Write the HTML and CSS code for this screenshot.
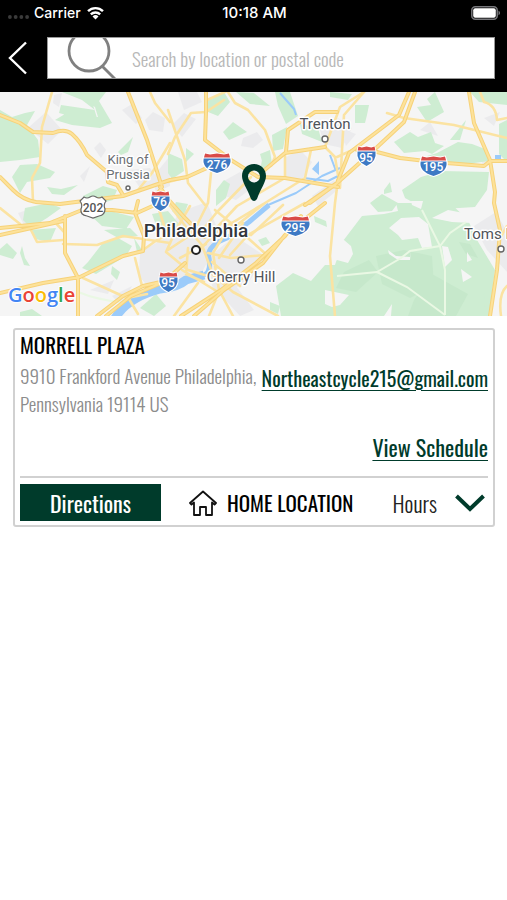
FILE: index.html
```html
<!DOCTYPE html>
<html lang="en">
<head>
<meta charset="utf-8">
<meta name="viewport" content="width=device-width, initial-scale=1">
<title>Locations</title>
<link rel="stylesheet" href="styles.css">
</head>
<body>
<header class="top">
  <div class="status">
    <div class="status-left">
      <svg class="dots" viewBox="0 0 22 4" aria-hidden="true"><circle cx="2" cy="2" r="2"/><circle cx="8" cy="2" r="2"/><circle cx="14" cy="2" r="2"/><circle cx="20" cy="2" r="2"/></svg>
      <span>Carrier</span>
      <svg class="wifi" viewBox="0 0 20 15" aria-hidden="true"><path d="M2 5.5a11.500 11.500 0 0 1 16 0M5 9a7.200 7.200 0 0 1 10 0"/><path class="wifi-base" d="M10 14.500 6.800 11.300a4.600 4.600 0 0 1 6.400 0z"/></svg>
    </div>
    <time>10:18 AM</time>
    <svg class="battery" viewBox="0 0 30 14" aria-hidden="true"><rect class="battery-case" x=".8" y=".8" width="25.400" height="12.400" rx="3.500"/><rect class="battery-fill" x="2.200" y="2.200" width="22.600" height="9.600" rx="2"/><path class="battery-tip" d="M27.500 4.800c2 .7 2 3.700 0 4.400z"/></svg>
  </div>
  <form class="search-row">
    <button class="back" type="button" aria-label="Back"><svg viewBox="0 0 20 34" aria-hidden="true"><path d="M18 1.500 2 17l16 15.500"/></svg></button>
    <label class="search">
      <svg class="lens" viewBox="0 0 50 40" aria-hidden="true"><circle cx="22" cy="13" r="20"/><path d="m35 28 13 13"/></svg>
      <input type="search" placeholder="Search by location or postal code" aria-label="Search by location or postal code">
    </label>
  </form>
</header>

<main>
  <svg class="map" viewBox="0 92 507 224" role="img" aria-label="Map of the Philadelphia area">
    <defs>
      <symbol id="shield" viewBox="0 0 20 20" preserveAspectRatio="none" overflow="visible">
        <path fill="#fff" d="M1-.5 5 .5 10-.5l5 1 4-1 1.500 6q1.500 11-10.500 15.500Q-2 16.500-.5 5.500z"/>
        <path fill="#3d79c4" d="M.5 5.500h19Q21 15.500 10 20-1 15.500.5 5.500z"/>
        <path fill="#d94b48" d="M1.500.5 5 1.500l5-1 5 1 3.500-1 .8 4H.7z"/>
      </symbol>
      <path id="major" d="M0 115l20 8 13 9 20 1q12-5 19 1 9 8 15 21l20 17 1 10 9 3 6 10M0 177l13 13q10 10 23 12l24 2 63-8 47-16 17-3 20-9M128 92l19 48 15 47-4 6M0 228l50-5 32-13 30 0 25 3 20-9M0 235l63-14M65 216v37l13 25v38M0 293l43-10 37-6 43-21 20-5 1-15-9-23 3-12M97 316l26-20 20-10 22-5 20-18M106 316l25-20 28-12M231 160l27 17 27 1 53 9M261 173l24-20 40-6M286 152l2-22 27-18h22M206 92v20l-1 28 26 20M301 216l-16 20-29 27-35 27-40 26M325 203l-40 32-22 28-39 27-30 26M409 92l-10 23-50 38-12 30-32 22M415 92l-11 30-30 28-38 34-26 19M469 92l5 31 16 37 5 32-1 11M357 150l20 2 23 6 34 4 50 4 6-5h17M494 203l6 27-3 40-7 46M160 187l8 12 16 18 20 20"/>
    </defs>
    <rect class="land" y="92" width="507" height="224"/>
    <g class="urban">
      <path d="M28 128l18-16 16 18-14 14zM80 176l10-10-6 16zM94 148l6-6 6 8-5 8zM54 95l8-2-3 14-6-4zM122 110l10-6 10 14-6 6zM145 120l8-8 12 6-2 14-14-2zM152 178l18-22v30l-14 6zM128 170l22-2 10 14-20 6z"/>
      <path d="M140 252l25-14 14-26 28-10 10 26-2 20-14 26-28 8-22 8-12-14zM205 260l30-24 30 20-16 26-34 14zM172 125l12-12 12 6-14 18zM243 138l14-6 6 8-10 8-12-2zM284 158l16-8 12 12-10 18-16-4zM320 130l18-12 14 10-10 20-18-4zM312 196l22-16 6 8-22 18zM178 92l18-2 6 12-18 8zM222 182l18-10 12 16-16 12-16-6z"/>
      <path d="M218 292l18-6 18 24-14 6zM90 290l24-10-6 14zM112 296l20-10-10 20zM420 130l10-8 8 14zM484 118l16-6-6 14zM476 148l12 4-4 16zM364 220l22-6-4 16-16 6zM474 226l22-14 11 20v40l-20-22zM340 128l16 6-10 12zM18 213l12-4 4 12-10 4zM440 190l10 4-4 12z"/>
    </g>
    <g class="park">
      <path d="M62 92h27l8 26-16 1-22-6 2-8 34 5-13-10zM0 110l12 7 13-4 10-2-8 14 11 15 2 17-20 3-20 2zM12 177l8-12 17-1 18 8-5 6-23 4-7 11zM47 187l14 2 17-4-14 10-12-1zM118 152l15-15-5 15-7 3zM70 92h36l-7 9 13 22-12 5-28-3-17-5 10-6 33 3-3-10zM83 196l20-10 14 4-4 10-22 6z"/>
      <path d="M25 208l24-5 12 5-14 10-16 10-8-8zM30 230l26-2-6 14-15-3zM0 249l7-6 10 10-4 6-13-4zM22 246l3 12 5 8-6-1-4-12zM90 215l20-4 24 6-8 12-24-3zM104 230l26-2 8 8-20 2zM88 262l14-18 16-6 14 8-6 10-30 18-14-6zM112 266l8 6-3 8-6-6zM134 238l8 12-5 2zM20 312l12-3 10 7H20zM140 308l16-14 10 12-12 10zM152 214l16-3 12 14-14 6-10-6zM176 202l12 2-6 16-10-9z"/>
      <path d="M206 100l18-8 6 10-12 14-10-4zM223 132l10-10 14 10-18 8zM272 135l15-8-4 22-10 2zM260 154l10-4 2 14-8 4zM300 124l18 4 4 14-20-8zM168 153l14 6 2 12-12 8-4-6zM216 190l8-10 6 4-4 14-10 8zM236 92l18 1 16 13-20-2zM275 92h15l8 24-12 8-8-18zM330 92l22 2-4 6-18-3zM262 160l6-5-2 13-6 3zM186 148l8 6-8 8z"/>
      <path d="M355 105h14l-2 10-2 8h-10zM417 107l14-2-4-6 8-7 9 20-17 10zM394 142l16-10 8 5 13-5 4 11 9 3-12 8-7-3-21 2zM437 153l21-11 14 2 13 5 4 12-22 3-34-2-6-6zM450 140l16-20-6 20zM470 92h37v13l-28-3zM499 124l8-4v42l-8-8z"/>
      <path d="M421 177l20-6 48 1-2 18-12 17-48 3-22-12-3-8zM384 190l6-8 2 10-8 2zM362 216l22-2 14-3-2-8h54l18 17 9 20 18 30-6 46H281l-5-30 17-13 18 8 14-16h10l8-24z"/>
      <path d="M314 216l12 5 1 6-12-5zM258 240l8-3 4 6-8 3zM270 302l10 4-2 8-8-4zM478 303l7-10-1 16zM370 203l12-9 16 9-6 8-14 1z"/>
    </g>
    <path class="park-deep" d="M376 256l28-6 28 6 2 30-24 12-28-14zM344 272l25-12 9 12-22 20-20-4zM432 274l36 20-12 22h-48l6-16zM459 242l11 2 8 14-12-4z"/>
    <path class="land" d="M389 228l12-10 18-1 9 7 4 23-10 1-4-10-16 2-4-5zM432 218l16-8 21 4 3 9-20-1zM442 246l6 1 4 13-7 7zM461 269l11 8-9 5zM325 236l12-2 14 12 2 8-5 9-11-3-12 4zM325 290l24 5-9 10-8 2-7-3zM388 250l8 6 14 1 1-8-1 11-12 0-9-6zM384 316l8-12-1 12zM467 252l5 8-5 2zM411 201l12 0-2 8-9-4z"/>
    <g class="trail"><path d="M337 276l40-4 24-14 9-7 30-5 10-13 16-11M377 272l30 15 38 28M422 210l18 36 5 24v45M78 292q20 8 42 10"/></g>
    <g class="water">
      <path class="river" d="M114 320q12-22 46-31 18-2 26-9l18-5"/>
      <path class="river-mid" d="M200 276q12-1 9-18-3-12 18-20l22-16 20-17"/>
      <path class="river-thin" d="M268 205l28-12 26-17 18-8M304 178l24 3 10-5M280 93l14 16 2 6M330 155l6 16"/>
      <path class="pond" d="M312 169l7-8v14zM495 155h6v5h-6z"/>
    </g>
    <g class="roads">
      <path d="M52 92l-10 35-2 36-8 15 1 24M150 92l5 11 15 19M170 143l-18 30-14 17M0 208l20 16M30 228l7 14 26-2M54 221l11 12M63 244l34 1 26-9 47 7M83 278l44 20 20-4M143 250l14-10 18-8 20-2M135 258l7 28M126 294l12 20M157 203l10 32"/>
      <path d="M228 92l7 11 13 7 17 20 10 27-4 9M206 112l-15 1-16 24-7 17M168 110l17 50 3 23 17 22M168 182l20-5 17-9M211 173l-3 30-11 22M285 153v25l-48 28-28 30M283 205l-32 30M265 203l-50 30-18 20M251 177l-34 35-16 20M311 150l-6 28-40 25-28 22M325 147l10 10 3 18M325 147l15-40 24-15"/>
      <path d="M168 203l18 24 16 18 11 30 20 17 45 24M190 206l-14 24-10 22 22 18 20 6M168 250l30-20 17 4M188 248l-2 26 18 8M180 258l26-14M208 253l23 5 34-3M215 210l16 13 37 33M231 223l-18 30 6 37M243 223l-24 35M219 290l14 26M219 291l-10 25M198 283l-24 33M182 270l36 22M305 203l-57 32-18 20M212 262l28 24M207 100l20-9M206 112l18-12M364 92l-20 23-2 35-2 38M387 113l17 5 50 7 53 13M480 92l4 10q12 3 13 18l10-2M338 180l-3 23-5 53 5 60M337 157l20-9M499 240l8-14M507 286q-9 8-6 30"/>
    </g>
    <use class="roads-edge" href="#major"/>
    <use class="roads-core" href="#major"/>

    <g class="shields">
      <g><use href="#shield" x="203" y="153" width="28" height="20"/><text x="217" y="169">276</text></g>
      <g><use href="#shield" x="151" y="191" width="19" height="20"/><text x="160" y="206">76</text></g>
      <g><use href="#shield" x="357" y="146" width="19" height="20"/><text x="366" y="162">95</text></g>
      <g><use href="#shield" x="420" y="156" width="27" height="20"/><text x="433" y="171">195</text></g>
      <g><use href="#shield" x="281" y="216" width="29" height="20"/><text x="295" y="232">295</text></g>
      <g><use href="#shield" x="159" y="272" width="19" height="20"/><text x="168" y="287">95</text></g>
    </g>
    <path class="us-route" d="M84 197q3 2 6 0 3-2 6 0 3 2 6 0l4 4q-3 4-1 8 0 6-6 7l-6 2-6-2q-7-1-6-7 2-4-1-8z"/>
    <text class="us-route-text" x="93" y="212">202</text>

    <g class="labels">
      <text class="town-small" x="128" y="164">King of</text>
      <text class="town-small" x="128" y="179">Prussia</text>
      <text class="town" x="325" y="129">Trenton</text>
      <text class="town" x="241" y="282">Cherry Hill</text>
      <text class="town start" x="464" y="239">Toms River</text>
      <text class="city" x="196" y="237">Philadelphia</text>
    </g>
    <g class="spots"><circle cx="128" cy="188" r="2"/><circle cx="325" cy="139" r="3"/><circle cx="241" cy="260" r="3"/><circle cx="501" cy="249" r="3"/><circle class="spot-city" cx="196" cy="250" r="4"/></g>
    <path class="pin" fill-rule="evenodd" d="M254 164c7 0 12 5 12 12 0 6-5 12-9 23q-3 4-6 0c-4-11-9-17-9-23 0-7 5-12 12-12zm0 6.500a6 6 0 1 0 0 12 6 6 0 1 0 0-12z"/>
    <text class="brand" x="8" y="302"><tspan fill="#4285f4">G</tspan><tspan fill="#ea4335">o</tspan><tspan fill="#fbbc05">o</tspan><tspan fill="#4285f4">g</tspan><tspan fill="#34a853">l</tspan><tspan fill="#ea4335">e</tspan></text>
  </svg>

  <article class="card">
    <h1>MORRELL PLAZA</h1>
    <div class="details">
      <address>9910 Frankford Avenue Philadelphia, Pennsylvania 19114 US</address>
      <a class="email" href="mailto:Northeastcycle215@gmail.com">Northeastcycle215@gmail.com</a>
    </div>
    <a class="schedule" href="#schedule">View Schedule</a>
    <footer class="actions">
      <button class="directions" type="button">Directions</button>
      <div class="home">
        <svg viewBox="0 0 28 26" aria-hidden="true"><path d="M14 1.500 1 13l1.500 1.500L5 12.500V25h6v-8h6v8h6V12.500l2.500 2L27 13z"/></svg>
        <span>HOME LOCATION</span>
      </div>
      <button class="hours" type="button"><span>Hours</span><svg viewBox="0 0 30 18" aria-hidden="true"><path d="m1.500 2 13.500 13L28.500 2"/></svg></button>
    </footer>
  </article>
</main>
</body>
</html>
```
FILE: styles.css
```css
* { box-sizing: border-box; }
body {
  margin: 0;
  background: #fff;
  color: #000;
  font-family: Oswald, "Roboto Condensed", "Open Sans Condensed", "Liberation Sans Narrow", "Liberation Sans", sans-serif;
  font-size: 19px;
}
button, input { font: inherit; border: 0; padding: 0; background: none; color: inherit; }
button { cursor: pointer; }
svg { display: block; flex: none; }

.top { background: #000; color: #fff; padding-bottom: 13px; }
.status {
  display: grid;
  grid-template-columns: 1fr auto 1fr;
  align-items: center;
  height: 26px;
  padding: 0 6px 0 8px;
  font: 500 14px/26px Inter, Roboto, sans-serif;
}
.status time { font-size: 15px; }
.status-left { display: flex; align-items: center; gap: 5px; }
.dots { width: 21px; height: 4px; margin-top: 8px; fill: #3b3b3b; }
.wifi { width: 19px; height: 14px; fill: none; stroke: #fff; stroke-width: 2.6; }
.wifi-base { fill: #fff; stroke: none; }
.battery { width: 30px; height: 14px; justify-self: end; }
.battery-case { fill: none; stroke: #77777b; stroke-width: 1.5; }
.battery-fill { fill: #fff; }
.battery-tip { fill: #77777b; }

.search-row { display: flex; align-items: center; margin: 11px 12px 0 8px; }
.back { width: 39px; height: 42px; }
.back svg { width: 20px; height: 34px; fill: none; stroke: #fff; stroke-width: 2.4; }
.search {
  display: flex;
  flex: 1;
  height: 42px;
  padding-left: 19px;
  overflow: hidden;
  background: #fff;
  border: 1px solid #999;
}
.lens { width: 50px; height: 40px; fill: none; stroke: #808080; stroke-width: 2.8; }
.search input { flex: 1; min-width: 0; padding: 0 0 0 15px; color: #333; font-weight: 300; outline: 0; appearance: none; }
.search input::placeholder { color: #b8b8b8; opacity: 1; }

.map { width: 100%; height: auto; font-family: Roboto, "Liberation Sans", sans-serif; }
.land { fill: #f5f5f5; }
.urban { fill: #ebebed; }
.park { fill: #ceedd2; }
.park-deep { fill: #c6e8cb; }
.trail { fill: none; stroke: #eaf8e4; stroke-width: 2; }
.water { fill: none; stroke: #9bcbfa; stroke-linejoin: round; }
.river { stroke-width: 9; }
.river-mid { stroke-width: 5; }
.river-thin { stroke-width: 2; }
.pond { fill: #9bcbfa; stroke: none; }
.roads, .roads-edge, .roads-core { fill: none; stroke-linejoin: round; stroke-linecap: round; }
.roads { stroke: #fbe3a2; stroke-width: 2.6; }
.roads-edge { stroke: #f6d27a; stroke-width: 4; }
.roads-core { stroke: #fde29a; stroke-width: 2; }
.shields text, .us-route-text { font-size: 12px; font-weight: 500; text-anchor: middle; fill: #fff; }
.us-route { fill: #fff; stroke: #666; stroke-width: 1.2; }
.us-route-text { fill: #555; }
.labels text { text-anchor: middle; fill: #50545a; stroke: #fff; stroke-width: 3; stroke-linejoin: round; paint-order: stroke; }
.labels .town-small { font-size: 13px; fill: #6b6f74; }
.labels .town { font-size: 15px; }
.labels .start { text-anchor: start; }
.labels .city { font-size: 19px; font-weight: 500; fill: #33363b; }
.spots { fill: #fff; stroke: #666; stroke-width: 1.4; }
.spot-city { stroke: #222; stroke-width: 2; }
.pin { fill: #003b2b; }
.brand { font-family: "Open Sans", Roboto, sans-serif; font-size: 20px; font-weight: 600; stroke: #fff; stroke-width: 2; paint-order: stroke; }

.card {
  display: flex;
  flex-direction: column;
  margin: 12px 12px 0 13px;
  padding: 1px 5px 4px;
  border: 2px solid #d1d1d1;
  border-radius: 3px;
}
h1 { margin: 0 0 2px; font-size: 21px; font-weight: 400; line-height: 28px; }
.details { display: flex; justify-content: space-between; gap: 4px; line-height: 28px; }
address { flex: 1; color: #8c8c8c; font-style: normal; font-weight: 300; }
.email, .schedule { color: #003b2b; text-underline-offset: 3px; text-decoration-thickness: 1px; }
.email { font-size: 20px; line-height: 34px; }
.schedule { align-self: flex-end; margin: 15px 0 14px; font-size: 22px; line-height: 30px; }
.actions {
  display: flex;
  align-items: center;
  justify-content: space-between;
  padding-top: 6px;
  border-top: 2px solid #d1d1d1;
  font-size: 22px;
}
.directions { width: 141px; height: 37px; background: #003b2b; color: #fff; }
.home { display: flex; align-items: center; gap: 10px; margin: 0 auto 0 28px; font-size: 21px; }
.home svg { width: 28px; height: 26px; fill: #fff; stroke: #111; stroke-width: 1.8; stroke-linejoin: round; }
.hours { display: flex; align-items: center; gap: 18px; padding-right: 3px; color: #222; font-weight: 300; }
.hours svg { width: 30px; height: 18px; fill: none; stroke: #003b2b; stroke-width: 4; }
```
